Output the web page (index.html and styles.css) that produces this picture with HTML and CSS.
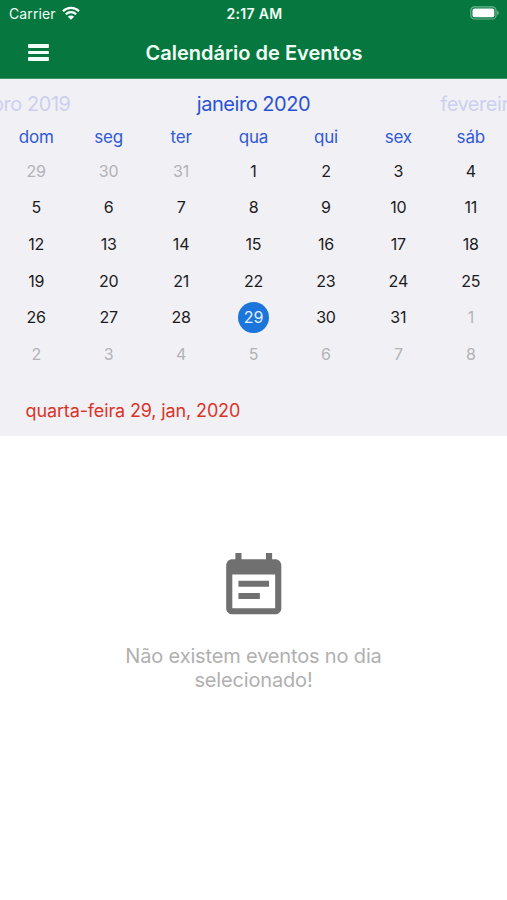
FILE: index.html
```html
<!DOCTYPE html>
<html lang="pt-BR">
<head>
  <meta charset="UTF-8">
  <meta name="viewport" content="width=device-width, initial-scale=1.0">
  <title>Calendário de Eventos</title>
  <link rel="stylesheet" href="styles.css">
</head>
<body>
  <!-- Header -->
  <header class="header">
    <div class="status-bar">
      <div class="carrier">
        <span>Carrier</span>
        <svg class="wifi" viewBox="0 0 18 14">
          <path d="M1 5.2a11.4 11.4 0 0 1 16 0" />
          <path d="M3.9 8.3a7.2 7.2 0 0 1 10.2 0" />
          <path class="dot" d="M5.9 10.7a4.3 4.3 0 0 1 6.2 0L9 13.8z" />
        </svg>
      </div>
      <div class="time">2:17 AM</div>
      <svg class="battery" viewBox="0 0 30 14">
        <rect class="shell" x="0.8" y="0.8" width="25.2" height="12.2" rx="3.6" />
        <rect class="charge" x="2.5" y="2.5" width="21.8" height="8.8" rx="2" />
        <path class="tip" d="M27.2 4.8v4.2c1-.4 1.6-1.2 1.6-2.1s-.6-1.7-1.6-2.1z" />
      </svg>
    </div>
    <div class="nav-bar">
      <button class="menu-button" aria-label="Menu">
        <span></span>
        <span></span>
        <span></span>
      </button>
      <h1>Calendário de Eventos</h1>
    </div>
  </header>

  <!-- Calendar -->
  <section class="calendar">
    <div class="months">
      <span class="month previous">dezembro 2019</span>
      <span class="month current">janeiro 2020</span>
      <span class="month next">fevereiro 2020</span>
    </div>
    <div class="weekdays">
      <span>dom</span>
      <span>seg</span>
      <span>ter</span>
      <span>qua</span>
      <span>qui</span>
      <span>sex</span>
      <span>sáb</span>
    </div>
    <div class="days" id="days"></div>
    <p class="selected-date">quarta-feira 29, jan, 2020</p>
  </section>

  <!-- No events -->
  <main class="empty">
    <svg class="empty-icon" viewBox="0 0 24 24">
      <path d="M19 3h-1V1h-2v2H8V1H6v2H5c-1.1 0-2 .9-2 2v14c0 1.1.9 2 2 2h14c1.1 0 2-.9 2-2V5c0-1.1-.9-2-2-2zm0 16H5V8h14v11zM17 10H7v2h10v-2zM14 14H7v2h7v-2z" />
    </svg>
    <p>Não existem eventos no dia<br>selecionado!</p>
  </main>

  <script>
    const days = document.getElementById('days');
    const selectedDay = 29;

    // Add one day to the grid
    function addDay(number, className) {
      const day = document.createElement('span');
      day.className = 'day ' + className;
      day.textContent = number;
      days.appendChild(day);
    }

    for (let i = 29; i <= 31; i++) addDay(i, 'outside'); // December
    for (let i = 1; i <= 31; i++) addDay(i, i === selectedDay ? 'selected' : '');
    for (let i = 1; i <= 8; i++) addDay(i, 'outside');   // February
  </script>
</body>
</html>
```
FILE: styles.css
```css
* {
  box-sizing: border-box;
}
body {
  margin: 0;
  font-family: Inter, 'Liberation Sans', sans-serif;
  background: #fff;
  overflow: hidden;
}
.header {
  height: 79px;
  background: #06783f;
  border-bottom: 1px solid #3f9468;
  color: #f2fff6;
}
.status-bar {
  display: grid;
  grid-template-columns: 1fr auto 1fr;
  align-items: center;
  height: 27px;
  padding: 0 7px 0 9px;
  font-size: 14px;
}
.carrier {
  display: flex;
  align-items: center;
  gap: 6px;
  letter-spacing: 0.1px;
}
.wifi {
  width: 18px;
  height: 14px;
  margin-top: -2px;
  fill: none;
  stroke: #fff;
  stroke-width: 2.3;
}
.wifi .dot {
  fill: #fff;
  stroke: none;
}
.time {
  font-weight: 600;
  font-size: 14px;
  letter-spacing: 0.35px;
}
.battery {
  width: 30px;
  height: 14px;
  margin-top: -1px;
  justify-self: end;
}
.shell {
  fill: none;
  stroke: #6fb48f;
  stroke-width: 1.2;
}
.charge {
  fill: #fff;
}
.tip {
  fill: #6fb48f;
}
.nav-bar {
  display: grid;
  grid-template-columns: 77px 1fr 76px;
  align-items: center;
  height: 51px;
}
.menu-button {
  display: flex;
  flex-direction: column;
  gap: 3px;
  justify-self: center;
  width: 21px;
  padding: 0;
  border: none;
  background: none;
}
.menu-button span {
  height: 3.4px;
  border-radius: 1px;
  background: #f2fff6;
}
h1 {
  margin: 0;
  text-align: center;
  font-size: 20px;
  font-weight: 600;
  white-space: nowrap;
}
.calendar {
  height: 357px;
  background: #f1f0f5;
}
.months {
  display: grid;
  grid-template-columns: repeat(3, 253px);
  justify-content: center;
  padding-top: 10px;
  height: 42px;
  line-height: 30px;
  font-size: 20px;
  letter-spacing: -0.45px;
  text-align: center;
  color: #2a52d3;
  overflow: hidden;
}
.previous,
.next {
  color: #ccd0ef;
}
.weekdays,
.days {
  display: grid;
  grid-template-columns: repeat(7, 1fr);
  text-align: center;
}
.weekdays {
  height: 32px;
  line-height: 32px;
  font-size: 17px;
  letter-spacing: -0.2px;
  color: #3059d5;
}
.days {
  grid-auto-rows: 36.65px;
  align-items: center;
  justify-items: center;
  font-size: 16px;
  letter-spacing: -0.2px;
  color: #1b1b1d;
}
.day {
  width: 31px;
  height: 31px;
  line-height: 31px;
  border-radius: 50%;
}
.outside {
  color: #b3b3b6;
}
.selected {
  background: #1c75db;
  color: #e4f2ff;
}
.selected-date {
  margin: 26px 0 0 25.5px;
  line-height: 24px;
  font-size: 18px;
  letter-spacing: -0.13px;
  color: #d93428;
}
.empty {
  display: flex;
  flex-direction: column;
  align-items: center;
  padding-top: 114px;
}
.empty-icon {
  width: 73.5px;
  height: 73.5px;
  fill: #707070;
}
.empty p {
  margin: 20px 0 0;
  line-height: 24.5px;
  font-size: 20px;
  letter-spacing: -0.16px;
  text-align: center;
  color: #b0b0b0;
}
```
